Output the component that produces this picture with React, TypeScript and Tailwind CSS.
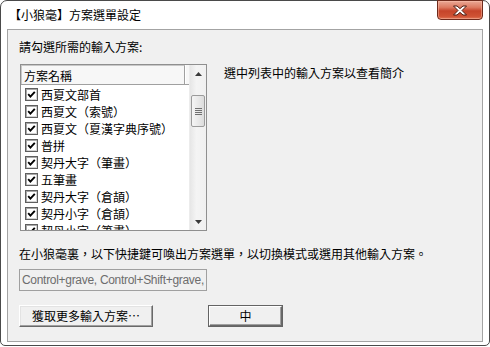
import React from "react";

const items = [
  "西夏文部首",
  "西夏文（索號）",
  "西夏文（夏漢字典序號）",
  "普拼",
  "契丹大字（筆畫）",
  "五筆畫",
  "契丹大字（倉頡）",
  "契丹小字（倉頡）",
  "契丹小字（筆畫）",
];

const cjk = { fontFamily: '"Noto Sans CJK TC", "Noto Sans", sans-serif' };

function CheckBox() {
  return (
    <div className="w-[13px] h-[13px] border border-[#5f5f5f] bg-white shadow-[inset_1px_1px_0_#a8a8a8,inset_-1px_-1px_0_#d4d4d4] flex items-center justify-center shrink-0">
      <svg width="9" height="9" viewBox="0 0 9 9">
        <path d="M1.2 4.2 L3.4 6.6 L7.8 1.8" fill="none" stroke="#000" strokeWidth="1.9" />
      </svg>
    </div>
  );
}

function Arrow({ up }: { up: boolean }) {
  return (
    <svg width="7" height="4" viewBox="0 0 7 4">
      {up ? <path d="M0 4 L3.5 0 L7 4 Z" fill="#3a3a3a" /> : <path d="M0 0 L3.5 4 L7 0 Z" fill="#3a3a3a" />}
    </svg>
  );
}

export default function App() {
  return (
    <div className="w-[490px] h-[347px] bg-white text-[12px] text-black" style={cjk}>
      <div className="relative h-[346px] border border-[#4a4a4a] rounded-t-[7px] rounded-b-[5px] bg-white flex flex-col px-[6px] pb-[3px]">
        {/* Title bar */}
        <div className="h-[28px] flex items-center pl-[2px] pb-[1px]">
          <span className="leading-[16px]">【小狼毫】方案選單設定</span>
        </div>
        {/* Close button */}
        <div className="absolute right-[6px] top-[-1px] w-[46px] h-[20px] rounded-b-[4px] border border-[#6e2a1c] bg-[linear-gradient(#eaa896_0%,#dd7b62_35%,#c6442a_55%,#cf5234_85%,#e07657_100%)] shadow-[inset_0_0_0_1px_rgba(255,200,180,0.45)] flex items-center justify-center">
          <svg width="16" height="11" viewBox="0 0 16 11">
            <path
              d="M1.5 1 L5 1 L8 3.6 L11 1 L14.5 1 L10 5.5 L14.5 10 L11 10 L8 7.4 L5 10 L1.5 10 L6 5.5 Z"
              fill="#ffffff"
              stroke="#4a1a10"
              strokeWidth="1"
              strokeLinejoin="round"
            />
          </svg>
        </div>
        {/* Client area */}
        <div className="flex-1 border border-[#a3a3a3] bg-[#f0f0f0] pl-[11px] flex flex-col">
          <div className="mt-[9px] h-[16px] leading-[16px]">請勾選所需的輸入方案:</div>
          <div className="mt-[9px] flex items-start">
            {/* List */}
            <div className="ml-[1px] w-[187px] h-[167px] border border-[#8f8f8f] bg-white flex overflow-hidden">
              <div className="w-[168px] flex flex-col overflow-hidden">
                <div className="h-[20px] shrink-0 flex border-b border-[#a0a0a0] bg-[#f7f7f7]">
                  <div className="w-[164px] border-r border-[#a0a0a0] shadow-[1px_0_0_#ffffff] pl-[2px] leading-[19px] border-l border-t border-l-[#c8c8c8] border-t-[#c8c8c8]">
                    方案名稱
                  </div>
                </div>
                <div className="flex flex-col pt-[1px]">
                  {items.map((t) => (
                    <div key={t} className="h-[17px] shrink-0 flex items-center pl-[4px] gap-[3px]">
                      <CheckBox />
                      <span className="leading-[17px] whitespace-nowrap">{t}</span>
                    </div>
                  ))}
                </div>
              </div>
              {/* Scrollbar */}
              <div className="w-[17px] flex flex-col bg-[linear-gradient(90deg,#e6e6e6,#f4f4f4_40%,#f0f0f0)] border-l border-[#ececec]">
                <div className="h-[17px] flex items-center justify-center">
                  <Arrow up />
                </div>
                <div className="h-[13px]" />
                <div className="mx-[1px] h-[32px] rounded-[2px] border border-[#9b9b9b] bg-[linear-gradient(90deg,#f5f5f5,#e9e9e9_50%,#dcdcdc)] flex flex-col items-center justify-center gap-[1px]">
                  <div className="w-[7px] h-[1px] bg-[#707070]" />
                  <div className="w-[7px] h-[1px] bg-[#707070]" />
                  <div className="w-[7px] h-[1px] bg-[#707070]" />
                  <div className="w-[7px] h-[1px] bg-[#707070]" />
                </div>
                <div className="flex-1" />
                <div className="h-[17px] flex items-center justify-center">
                  <Arrow up={false} />
                </div>
              </div>
            </div>
            <div className="ml-[17px] mt-[1px] leading-[16px]">選中列表中的輸入方案以查看簡介</div>
          </div>
          <div className="mt-[15px] h-[16px] leading-[16px] whitespace-nowrap">
            在小狼毫裏，以下快捷鍵可喚出方案選單，以切換模式或選用其他輸入方案。
          </div>
          <div
            className="mt-[7px] w-[188px] h-[22px] border border-[#a0a0a0] bg-[#f0f0f0] px-[2px] flex items-center overflow-hidden whitespace-nowrap text-[#6d6d6d] text-[12px] tracking-[-0.3px]"
            style={{ fontFamily: '"Liberation Sans", Arial, sans-serif' }}
          >
            Control+grave, Control+Shift+grave,
          </div>
          <div className="mt-[14px] flex">
            <div className="w-[134px] h-[22px] border-t border-l border-white border-b border-r border-b-[#696969] border-r-[#696969] shadow-[inset_-1px_-1px_0_#a0a0a0,inset_1px_1px_0_#e3e3e3] bg-[#f0f0f0] flex items-center justify-center leading-[16px]">
              獲取更多輸入方案…
            </div>
            <div className="ml-[55px] w-[75px] h-[22px] border border-[#646464] flex">
              <div className="flex-1 border-t border-l border-white border-b border-r border-b-[#696969] border-r-[#696969] shadow-[inset_-1px_-1px_0_#a0a0a0] bg-[#f0f0f0] flex items-center justify-center leading-[16px]">
                中
              </div>
            </div>
          </div>
        </div>
      </div>
    </div>
  );
}
